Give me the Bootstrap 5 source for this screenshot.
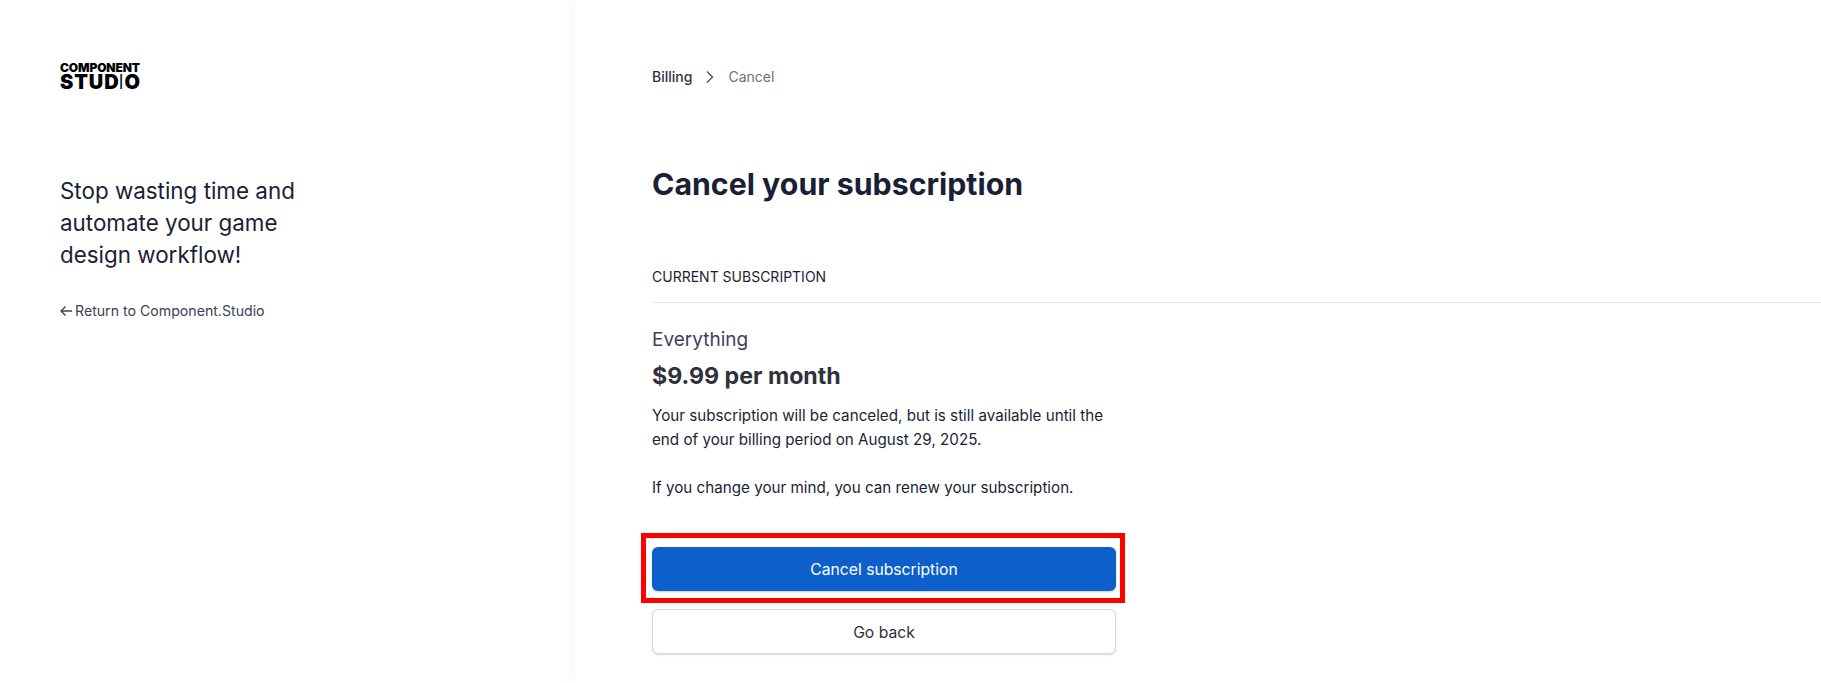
<!DOCTYPE html>
<html lang="en">
<head>
<meta charset="utf-8">
<title>Cancel subscription</title>
<link rel="stylesheet" href="https://cdn.jsdelivr.net/npm/bootstrap@5.3.0/dist/css/bootstrap.min.css">
<style>
html,body{height:100%;}
body{font-family:Inter,"Liberation Sans",sans-serif;color:#1a1f36;background:#fff;overflow:hidden;}
.shell{height:683px;}
.side{width:575px;padding:62px 0 0 60px;flex:none;}
.brandmark{color:#000;font-weight:900;width:82px;height:29px;}
.brandmark .top{display:block;font-size:12px;line-height:11px;letter-spacing:-.01em;white-space:nowrap;}
.brandmark .bot{display:block;font-size:20px;line-height:18px;letter-spacing:.9px;white-space:nowrap;}
.brandmark .nib{display:inline-block;width:3px;transform:scaleX(.38);transform-origin:0 50%;margin-right:2px;}
.tagline{margin:84px 0 0;width:260px;font-size:22.4px;line-height:32px;font-weight:400;color:#1a1f36;}
.backlink{display:flex;align-items:center;gap:3px;margin-top:30px;font-size:14.15px;line-height:20px;color:#3c4257;text-decoration:none;}
.mainpane{flex:1;padding:67px 0 0 77px;box-shadow:0 0 20px rgba(0,0,0,.05);min-width:0;background:#fff;}
.crumbs{display:flex;align-items:center;font-size:14px;line-height:20px;}
.crumbs a{color:#30313d;text-decoration:none;font-weight:500;}
.crumbs span{color:#6a7383;}
.crumbs svg{margin:0 14px;}
.pagetitle{margin:77px 0 0;font-size:30.3px;line-height:40px;font-weight:700;color:#1a1f36;}
.seclabel{margin-top:63px;padding-bottom:15px;font-size:14px;line-height:20px;color:#1a1f36;text-transform:uppercase;border-bottom:1px solid #e3e8ee;}
.planname{margin-top:23px;font-size:19px;line-height:28px;color:#3c4257;}
.planprice{margin-top:6px;font-size:23.2px;line-height:32px;font-weight:700;color:#30313d;}
.plantext{width:464px;margin:12px 0 0;font-size:15.2px;line-height:24px;color:#1a1f36;}
.actions{width:464px;margin-top:47px;}
.actbtn{display:block;width:100%;height:44px;padding:1px 0 0;font-size:15.7px;line-height:24px;border-radius:6px;}
.actbtn-primary{background:#0d60cc;border:0;color:#fff;box-shadow:0 1px 2px rgba(0,0,0,.2);}
.actbtn-light{height:45px;margin-top:18px;padding-top:2px;background:#fff;border:1px solid #d5d8dd;color:#30313d;box-shadow:0 1px 2px rgba(0,0,0,.15);}
.redmark{position:absolute;left:-11px;top:-14px;width:484px;height:70px;border:5px solid #ff0000;pointer-events:none;}
</style>
</head>
<body>
<div class="shell d-flex">
  <aside class="side">
    <div class="brandmark"><span class="top">COMPONENT</span><span class="bot">STUD<span class="nib">I</span>O</span></div>
    <h2 class="tagline">Stop wasting time and automate your game design workflow!</h2>
    <a class="backlink" href="#"><svg width="12" height="12" viewBox="0 0 12 12" fill="none" stroke="#3c4257" stroke-width="1.4"><path d="M12 6H1M5.5 1.5 1 6l4.5 4.5"/></svg>Return to Component.Studio</a>
  </aside>
  <main class="mainpane">
    <nav class="crumbs"><a href="#">Billing</a><svg width="8" height="14" viewBox="0 0 8 14" fill="none" stroke="#4f566b" stroke-width="1.4"><path d="M1 1.5 6.5 7 1 12.5"/></svg><span>Cancel</span></nav>
    <h1 class="pagetitle">Cancel your subscription</h1>
    <div class="seclabel">Current subscription</div>
    <div class="planname">Everything</div>
    <div class="planprice">$9.99 per month</div>
    <p class="plantext">Your subscription will be canceled, but is still available until the end of your billing period on August 29, 2025.<br><br>If you change your mind, you can renew your subscription.</p>
    <div class="actions position-relative">
      <button class="btn actbtn actbtn-primary" type="button">Cancel subscription</button>
      <span class="redmark"></span>
      <button class="btn actbtn actbtn-light" type="button">Go back</button>
    </div>
  </main>
</div>
<script src="https://cdn.jsdelivr.net/npm/bootstrap@5.3.0/dist/js/bootstrap.bundle.min.js"></script>
</body>
</html>
